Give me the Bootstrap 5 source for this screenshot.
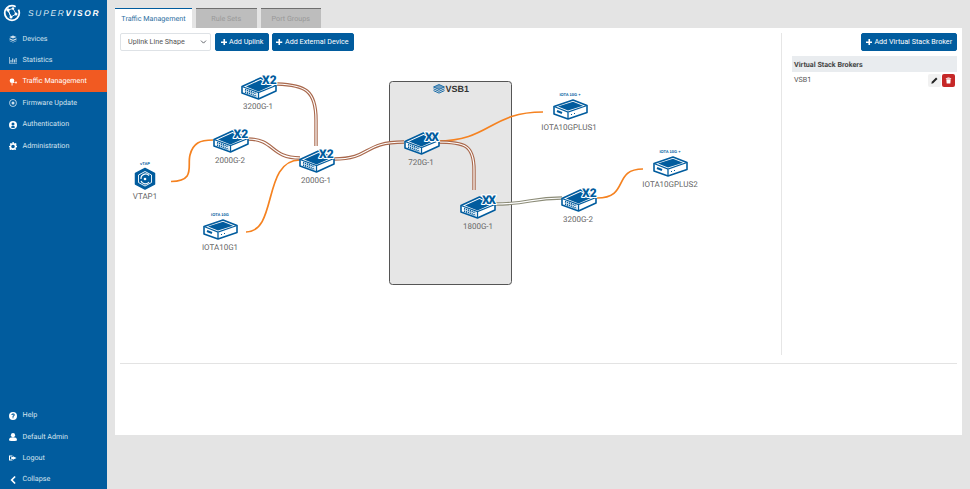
<!DOCTYPE html>
<html lang="en">
<head>
<meta charset="utf-8">
<title>Supervisor - Traffic Management</title>
<link rel="stylesheet" href="https://cdn.jsdelivr.net/npm/bootstrap@5.3.0/dist/css/bootstrap.min.css">
<style>
html,body{height:489px;overflow:hidden}
body{background:#e4e4e4;font-family:Roboto,"Noto Sans",sans-serif;font-size:7.2px;color:#555;line-height:1.2;text-rendering:geometricPrecision}
.side-bar{width:107px;height:489px;background:#015c9e;flex:none;color:#dbe8f2}
.brand-row{height:27.5px;padding:4px 0 0 3px}
.brand-name{font-family:"Liberation Sans",sans-serif;font-style:italic;font-size:8.4px;letter-spacing:1.75px;color:#dce9f3;font-weight:400;margin-left:7px;margin-top:4px}
.brand-name b{font-weight:700;color:#fff}
.menu-item{height:21.4px;padding:1.5px 0 0 9px;color:#d5e4ef;font-size:7.2px;gap:5.5px;border-radius:0;text-decoration:none}
.menu-item svg{width:8px;height:8px;flex:none;fill:#cfe0ec}
.menu-item.is-on{background:#f15a22;color:#fff}
.menu-item.is-on svg{fill:#fff}
.menu-item.is-bright svg{fill:#fff}
.foot-item{padding-top:3px}
.main-pane{padding:8px 8px 0 8px;width:863px;flex:none}
.tab-strip{border:0;gap:4px;height:20px;flex-wrap:nowrap}
.tab-strip .nav-link{border:0;border-top:1.5px solid #6e6e6e;border-radius:0;background:#bdbdbd;color:#999;font-size:7.2px;padding:0;height:20px;width:60.5px;line-height:20px;text-align:center}
.tab-strip .nav-link.active{background:#fff;color:#2d6f9f;border-top:1.5px solid #015c9e;width:77px}
.work-card{background:#fff;border:0;border-radius:0;height:407px;padding:5px}
.diagram-side{width:662px;height:322px;border-right:1px solid #e6e6e6;flex:none}
.broker-side{padding-left:10px;width:175px;flex:none}
.tool-row{gap:2.500px;height:18px}
.line-select{width:91px;height:18px;font-size:7.2px;padding:0 0 0 7px;border:1px solid #dee2e6;color:#555;border-radius:2px;background-size:7px 6px;background-position:right 3px center;margin-right:1.500px;min-height:0}
.act-btn{background:#015c9e;border:1px solid #015c9e;color:#fff;font-size:7.2px;padding:0;height:18px;border-radius:2px;line-height:1;white-space:nowrap;display:inline-flex;align-items:center;justify-content:center;gap:2px}
.act-btn:hover{background:#015c9e;color:#fff}
.act-btn svg{width:6.5px;height:6.5px;fill:#fff;flex:none}
.uplink-btn{width:54px}
.device-btn{width:82px}
.stack-btn{width:96px}
.broker-head{margin-top:5px;background:#e9ecef;height:16px;font-weight:700;font-size:7.2px;color:#444;padding:0 2px;line-height:17px}
.broker-row{height:16px;padding:2px 2px 0 2px;color:#555}
.broker-name{margin-top:2px}
.mini-btn{width:13px;height:13px;padding:0;border:0;border-radius:2px;display:inline-flex;align-items:center;justify-content:center;background:#f1f1f1}
.mini-btn svg{width:7px;height:7px;fill:#222}
.mini-del{background:#c62828;margin-left:1px}
.mini-del svg{fill:#fff}
.rule-line{margin:8px 0 0 0;border:0;border-top:1px solid #e3e3e3;opacity:1}
.topo-map{display:block;margin-top:4px;width:655px;height:300px}
.dev-label{font-family:Roboto,"Noto Sans",sans-serif;font-size:8px;fill:#666;text-anchor:middle}
.tiny-label{font-family:"Liberation Sans",sans-serif;font-size:4px;font-weight:700;fill:#015c9e;text-anchor:middle}
.mult-label{font-family:Roboto,"Liberation Sans",sans-serif;font-size:12px;font-weight:900;fill:#015c9e;paint-order:stroke;stroke:#fff;stroke-width:2.2px;stroke-linejoin:round}
.mult-tight{letter-spacing:-1.5px}
.vsb-label{font-family:"Liberation Sans",sans-serif;font-size:9px;font-weight:700;fill:#333}
.link-orange{fill:none;stroke:#f58220;stroke-width:1.7}
.link-brown{fill:none;stroke:#a9684c;stroke-width:3.4}
.link-grey{fill:none;stroke:#8c8c78;stroke-width:3.4}
.link-core{fill:none;stroke:#fff;stroke-width:1.2}
.vsb-box{fill:#e6e6e6;stroke:#555;stroke-width:1}
</style>
</head>
<body class="d-flex">
<svg width="0" height="0" class="position-absolute" aria-hidden="true">
  <symbol id="sw" viewBox="0 0 36 23">
    <path d="M1 9.5 19.5 1 35 8.500V14L17.500 22 1 16Z" fill="#fff" stroke="#015c9e" stroke-width="1.6" stroke-linejoin="round"/>
    <path d="M5 9.500 19.500 3 31 8.500 17.500 14.500Z" fill="#015c9e"/>
    <path d="M1 9.500 17.500 15.500 35 8.500M17.500 15.500V22" fill="none" stroke="#015c9e" stroke-width="1.3"/>
    <path d="M4 12.600 15.500 16.800M4 15 15.500 19.200" fill="none" stroke="#015c9e" stroke-width="1.700" stroke-dasharray="1.300 .7"/>
  </symbol>
  <symbol id="box" viewBox="0 0 35 21">
    <path d="M1 7.500 20 1 34 6.500V13.500L15 20 1 15Z" fill="#fff" stroke="#015c9e" stroke-width="1.600" stroke-linejoin="round"/>
    <path d="M5 7.500 20 2.800 30 6.800 15 11.500Z" fill="#015c9e"/>
    <path d="M1 7.500 15 13 34 6.500M15 13V20" fill="none" stroke="#015c9e" stroke-width="1.300"/>
    <path d="M4 12 9 14" stroke="#015c9e" stroke-width="2"/>
    <path d="M18 15.500h1M21 14.500h1" stroke="#015c9e" stroke-width="1.200"/>
  </symbol>
  <symbol id="plus" viewBox="0 0 8 8"><path d="M3 0h2v3h3v2H5v3H3V5H0V3h3z"/></symbol>
</svg>

<aside class="side-bar d-flex flex-column">
  <div class="brand-row d-flex align-items-start">
    <svg width="18" height="18" viewBox="0 0 18 18" aria-hidden="true"><circle cx="9" cy="9" r="7.300" fill="none" stroke="#fff" stroke-width="1.800" stroke-dasharray="38 4"/><path d="M5 6 10 4.500 13 10 8 13ZM5 6 8 13" fill="none" stroke="#fff" stroke-width=".9"/><circle cx="5" cy="6" r="1.700" fill="#fff"/><circle cx="10" cy="4.500" r="1.200" fill="#fff"/><circle cx="13" cy="10" r="1.500" fill="#fff"/><circle cx="8" cy="13" r="1.500" fill="#fff"/></svg>
    <div class="brand-name">SUPER<b>VISOR</b></div>
  </div>
  <nav class="nav flex-column flex-grow-1">
    <a class="nav-link menu-item d-flex align-items-center" href="#"><svg viewBox="0 0 8 8"><path d="M4 .5 7.500 2 4 3.500.5 2ZM.5 3.200 4 4.700 7.500 3.200V4.500L4 6 .5 4.500ZM.5 5.400 4 6.900 7.500 5.400V6L4 7.500.5 6Z"/></svg>Devices</a>
    <a class="nav-link menu-item d-flex align-items-center" href="#"><svg viewBox="0 0 8 8"><path d="M0 1h.7v6H8v.6H0ZM1.500 4h1v2.600h-1ZM3.200 2.500h1v4.100h-1ZM4.900 3.500h1v3.100h-1ZM6.600 2h1v4.600h-1Z"/></svg>Statistics</a>
    <a class="nav-link menu-item is-on d-flex align-items-center" href="#"><svg viewBox="0 0 8 8"><circle cx="3" cy="2.800" r="2.300"/><circle cx="7" cy="4.500" r=".9"/><path d="M2.600 4.500h.9v3h-.9ZM4 3.800 6.500 4.500 4 5Z"/></svg>Traffic Management</a>
    <a class="nav-link menu-item d-flex align-items-center" href="#"><svg viewBox="0 0 8 8"><path fill-rule="evenodd" d="M4 .3a3.700 3.700 0 1 0 0 7.400A3.700 3.700 0 0 0 4 .3Zm0 .8a2.900 2.900 0 1 1 0 5.800 2.900 2.900 0 0 1 0-5.800Z"/><circle cx="4" cy="4" r="1.500"/></svg>Firmware Update</a>
    <a class="nav-link menu-item is-bright d-flex align-items-center" href="#"><svg viewBox="0 0 8 8"><path fill-rule="evenodd" d="M4 0a4 4 0 1 0 0 8 4 4 0 0 0 0-8Zm0 1.600a1.500 1.500 0 1 1 0 3 1.500 1.500 0 0 1 0-3ZM1.700 6.300C2.200 5.300 3 5 4 5s1.800.3 2.300 1.300A3.100 3.100 0 0 1 4 7.100a3.100 3.100 0 0 1-2.300-.8Z"/></svg>Authentication</a>
    <a class="nav-link menu-item is-bright d-flex align-items-center" href="#"><svg viewBox="0 0 8 8"><path fill-rule="evenodd" d="M3.300 0h1.400l.2 1.100.8.400L6.700.9l1 1-.6 1 .3.800L8 3.900v1.300l-1.100.2-.3.800.6 1-1 1-1-.6-.8.300-.2 1H3.300l-.2-1-.8-.4-1 .6-1-1 .6-1-.3-.8L0 5.200V3.900l1.100-.2.3-.8-.6-1 1-1 1 .6.800-.3ZM4 2.700a1.800 1.800 0 1 0 0 3.600 1.800 1.800 0 0 0 0-3.600Z"/></svg>Administration</a>
    <div class="flex-grow-1"></div>
    <a class="nav-link menu-item foot-item is-bright d-flex align-items-center" href="#"><svg viewBox="0 0 8 8"><path fill-rule="evenodd" d="M4 0a4 4 0 1 0 0 8 4 4 0 0 0 0-8Zm-.5 5.200h1v1h-1ZM2.400 3c0-1 .7-1.500 1.700-1.500S5.700 2 5.700 2.900c0 .7-.4 1-.8 1.300-.3.200-.4.300-.4.700h-1c0-.7.200-1 .7-1.400.3-.2.500-.4.500-.6 0-.3-.3-.5-.6-.5-.4 0-.7.200-.7.600Z"/></svg>Help</a>
    <a class="nav-link menu-item foot-item is-bright d-flex align-items-center" href="#"><svg viewBox="0 0 8 8"><circle cx="4" cy="2.200" r="2.100"/><path d="M0 7c0-2 1.500-2.700 4-2.700S8 5 8 7c0 .7-1 1-4 1S0 7.700 0 7Z"/></svg>Default Admin</a>
    <a class="nav-link menu-item foot-item is-bright d-flex align-items-center" href="#"><svg viewBox="0 0 8 8"><path d="M0 1.500h3.500v1H1v3h2.500v1H0ZM4 2.200 7.500 4 4 5.800V4.900H2.200V3.100H4Z"/></svg>Logout</a>
    <a class="nav-link menu-item foot-item is-bright d-flex align-items-center" href="#"><svg viewBox="0 0 8 8"><path d="M5.500 0 6.700 1.100 3.800 4 6.700 6.900 5.500 8 1.500 4Z"/></svg>Collapse</a>
  </nav>
</aside>

<main class="main-pane">
  <ul class="nav nav-tabs tab-strip">
    <li class="nav-item"><a class="nav-link active" href="#">Traffic Management</a></li>
    <li class="nav-item"><a class="nav-link" href="#">Rule Sets</a></li>
    <li class="nav-item"><a class="nav-link" href="#">Port Groups</a></li>
  </ul>
  <div class="card work-card">
    <div class="d-flex">
      <section class="diagram-side">
        <div class="d-flex tool-row">
          <select class="form-select line-select" aria-label="Uplink Line Shape"><option>Uplink Line Shape</option></select>
          <button class="btn act-btn uplink-btn" type="button"><svg viewBox="0 0 8 8"><use href="#plus"/></svg>Add Uplink</button>
          <button class="btn act-btn device-btn" type="button"><svg viewBox="0 0 8 8"><use href="#plus"/></svg>Add External Device</button>
        </div>
        <svg class="topo-map" viewBox="120 55 655 300" role="img" aria-label="Network topology">
          <rect class="vsb-box" x="389.500" y="81.500" width="122" height="203" rx="3"/>
          <path d="M433.500 87 439 84.500 444.500 87 439 89.500Z" fill="#6f9dbf" stroke="#015c9e" stroke-width=".8" stroke-linejoin="round"/>
          <path d="M433.500 88.800 439 91.300 444.500 88.800M433.500 90.600 439 93.100 444.500 90.600" fill="none" stroke="#015c9e" stroke-width=".9"/>
          <text class="vsb-label" x="445.500" y="91.500">VSB1</text>

          <path class="link-orange" d="M171 181.500C196 181 187 166 190 155C193 143 200 140 213 140"/>
          <path class="link-orange" d="M246 232C278 232 262 160 300 160"/>
          <path class="link-orange" d="M437 141C490 141 490 112 543 112"/>
          <path class="link-orange" d="M597 198C630 198 612 169 643 169"/>

          <path class="link-brown" d="M277 84C305 85 316 90 316 120V146"/>
          <path class="link-core" d="M277 84C305 85 316 90 316 120V146"/>
          <path class="link-brown" d="M248 139C275 139 270 158 300 158"/>
          <path class="link-core" d="M248 139C275 139 270 158 300 158"/>
          <path class="link-brown" d="M334 159C372 159 362 142 404 142"/>
          <path class="link-core" d="M334 159C372 159 362 142 404 142"/>
          <path class="link-brown" d="M437 142C465 142 474 145 474 170V190"/>
          <path class="link-core" d="M437 142C465 142 474 145 474 170V190"/>
          <path class="link-grey" d="M495 204C530 204 530 198 562 198"/>
          <path class="link-core" d="M495 204C530 204 530 198 562 198"/>

          <use href="#sw" x="241" y="77" width="36" height="23"/>
          <text class="mult-label" x="262" y="84">X2</text>
          <text class="dev-label" x="258" y="109">3200G-1</text>

          <use href="#sw" x="213" y="130" width="36" height="23"/>
          <text class="mult-label" x="233.500" y="138">X2</text>
          <text class="dev-label" x="230" y="163">2000G-2</text>

          <use href="#sw" x="299" y="150" width="36" height="23"/>
          <text class="mult-label" x="319" y="158">X2</text>
          <text class="dev-label" x="316" y="183">2000G-1</text>

          <use href="#sw" x="404" y="132" width="36" height="23"/>
          <text class="mult-label mult-tight" x="425" y="140.500">XX</text>
          <text class="dev-label" x="421" y="165">720G-1</text>

          <use href="#sw" x="460" y="196" width="36" height="23"/>
          <text class="mult-label mult-tight" x="482" y="203.500">XX</text>
          <text class="dev-label" x="478" y="229">1800G-1</text>

          <use href="#sw" x="561" y="189" width="36" height="23"/>
          <text class="mult-label" x="582" y="197">X2</text>
          <text class="dev-label" x="578" y="222">3200G-2</text>

          <text class="tiny-label" x="570" y="96">IOTA 10G +</text>
          <use href="#box" x="553" y="99" width="35" height="21"/>
          <text class="dev-label" x="569" y="130">IOTA10GPLUS1</text>

          <text class="tiny-label" x="670" y="153">IOTA 10G +</text>
          <use href="#box" x="653" y="156" width="35" height="21"/>
          <text class="dev-label" x="670" y="187">IOTA10GPLUS2</text>

          <text class="tiny-label" x="220" y="216">IOTA 10G</text>
          <use href="#box" x="203" y="219" width="35" height="21"/>
          <text class="dev-label" x="220" y="250">IOTA10G1</text>

          <text class="tiny-label" x="145" y="165">vTAP</text>
          <path d="M145 168.500 154.500 173.500V184L145 189 135.500 184V173.500Z" fill="#015c9e" stroke="#015c9e" stroke-width="1.500" stroke-linejoin="round"/>
          <path d="M145 171.500 151.500 175V182.500L145 186 138.500 182.500V175Z" fill="none" stroke="#fff" stroke-width=".9"/>
          <path d="M149 175.500A4.600 4.600 0 0 0 141 179M141 181A4.600 4.600 0 0 0 149 182" fill="none" stroke="#fff" stroke-width="1.200"/>
          <circle cx="145" cy="179" r="1.300" fill="#fff"/>
          <text class="dev-label" x="145" y="199">VTAP1</text>
        </svg>
      </section>
      <section class="broker-side">
        <div class="d-flex justify-content-end">
          <button class="btn act-btn stack-btn" type="button"><svg viewBox="0 0 8 8"><use href="#plus"/></svg>Add Virtual Stack Broker</button>
        </div>
        <div class="broker-head">Virtual Stack Brokers</div>
        <div class="broker-row d-flex justify-content-between align-items-start">
          <span class="broker-name">VSB1</span>
          <span class="d-flex">
            <button class="btn mini-btn" type="button" aria-label="Edit"><svg viewBox="0 0 8 8"><path d="M5.800.6 7.400 2.200 2.500 7.100.4 7.600.9 5.500Z"/></svg></button>
            <button class="btn mini-btn mini-del" type="button" aria-label="Delete"><svg viewBox="0 0 8 8"><path d="M3 .5h2l.5.7H7v.9H1v-.9h1.500ZM1.500 2.700h5L6.100 7.500H1.900Z"/></svg></button>
          </span>
        </div>
      </section>
    </div>
    <hr class="rule-line">
  </div>
</main>
<script src="https://cdn.jsdelivr.net/npm/bootstrap@5.3.0/dist/js/bootstrap.bundle.min.js"></script>
</body>
</html>
